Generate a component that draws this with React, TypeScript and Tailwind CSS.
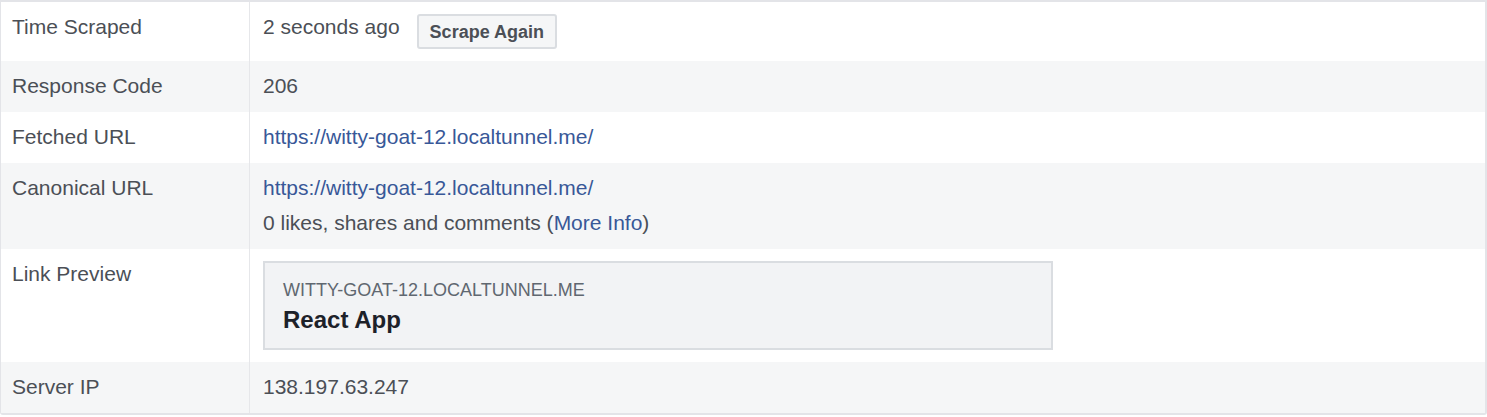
import type { ReactNode } from "react";

const FONT = { fontFamily: '"Liberation Sans", Arial, Helvetica, sans-serif' };

function Row({ label, gray, children }: { label: string; gray?: boolean; children: ReactNode }) {
    return (
        <div className={`flex ${gray ? "bg-[#f5f6f7]" : "bg-white"}`}>
            <div className="w-[249px] shrink-0 border-r border-[#e6e7ea] px-[11px] pt-[11px] pb-[13px] leading-[27px] text-[#4b4f56]">
                {label}
            </div>
            <div className="flex-1 px-[13px] pt-[11px] pb-[13px] leading-[27px] text-[#4b4f56]">
                {children}
            </div>
        </div>
    );
}

export default function App() {
    const url = "https://witty-goat-12.localtunnel.me/";

    return (
        <div className="bg-white w-[1487px] h-[417px]" style={FONT}>
            <div className="text-[21px] border-t-2 border-l border-r-2 border-b-2 border-[#e3e4e8] rounded-b-[3px] overflow-hidden">
                <Row label="Time Scraped">
                    <div className="flex items-start">
                        <span>2 seconds ago</span>
                        <button className="ml-[17px] mt-[1px] -mb-[1px] h-[35px] px-[11px] rounded-[3px] border-2 border-[#dadde1] bg-[#f5f6f7] text-[18px] font-bold text-[#4b4f56] leading-none">
                            Scrape Again
                        </button>
                    </div>
                </Row>
                <Row label="Response Code" gray>
                    206
                </Row>
                <Row label="Fetched URL">
                    <a className="text-[#385898]">{url}</a>
                </Row>
                <Row label="Canonical URL" gray>
                    <a className="block text-[#385898]">{url}</a>
                    <div className="mt-[8px]">
                        0 likes, shares and comments (<a className="text-[#385898]">More Info</a>)
                    </div>
                </Row>
                <Row label="Link Preview">
                    <div className="mt-[1px] -mb-[1px] w-[790px] h-[89px] border-2 border-[#dadde1] bg-[#f2f3f5] pl-[18px] pt-[15px]">
                        <div className="text-[18px] leading-[24px] text-[#606770] uppercase">witty-goat-12.localtunnel.me</div>
                        <div className="mt-[3px] text-[24px] leading-[30px] font-bold text-[#1d2129]">React App</div>
                    </div>
                </Row>
                <Row label="Server IP" gray>
                    138.197.63.247
                </Row>
            </div>
        </div>
    );
}
